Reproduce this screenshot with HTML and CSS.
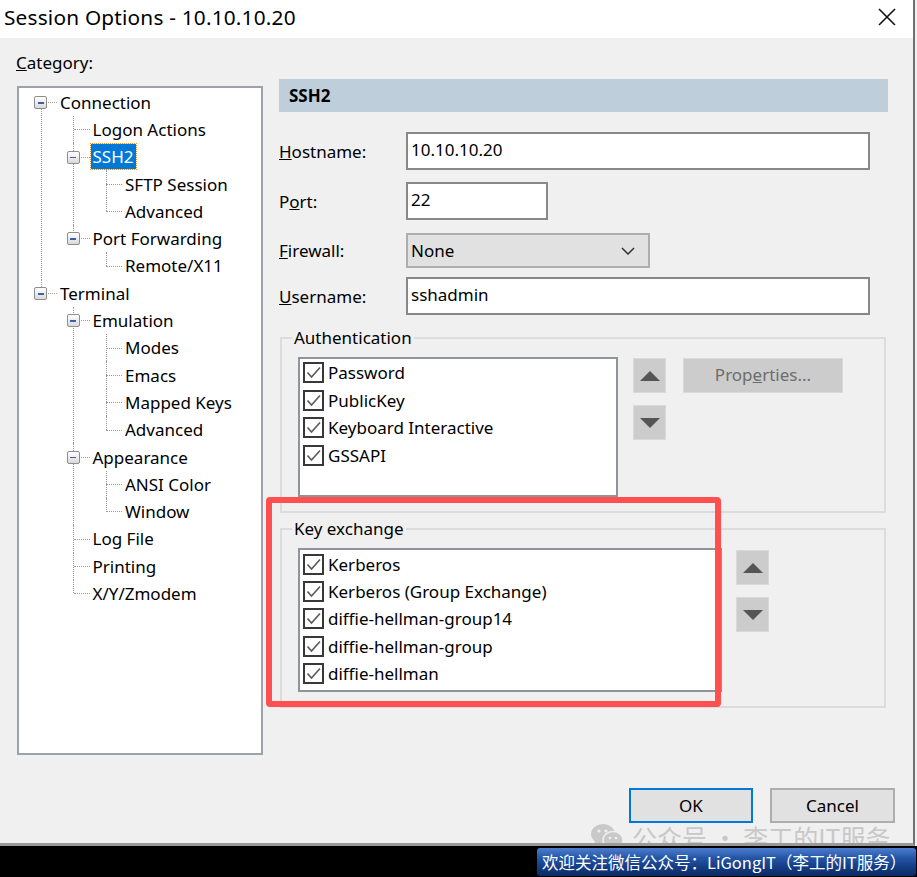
FILE: index.html
```html
<!DOCTYPE html>
<html>
<head>
<meta charset="utf-8">
<title>Session Options</title>
<link rel="stylesheet" href="styles.css">
</head>
<body>
<div class="screen">
  <div class="window">
    <div class="titlebar">
      <span class="title">Session Options - 10.10.10.20</span>
      <svg class="close" width="18" height="18" viewBox="0 0 18 18"><path d="M1 1L17 17M17 1L1 17" stroke="#111" stroke-width="1.6" fill="none"/></svg>
    </div>
    <div class="body">
      <div class="main">
        <div class="left">
          <div class="cat-label"><u>C</u>ategory:</div>
          <div class="tree">
            <ul class="root">
              <li><div class="row"><span class="exp"></span><span class="lbl">Connection</span></div>
                <ul>
                  <li><div class="row"><span class="lbl">Logon Actions</span></div></li>
                  <li><div class="row"><span class="exp"></span><span class="lbl sel">SSH2</span></div>
                    <ul>
                      <li><div class="row"><span class="lbl">SFTP Session</span></div></li>
                      <li><div class="row"><span class="lbl">Advanced</span></div></li>
                    </ul>
                  </li>
                  <li><div class="row"><span class="exp"></span><span class="lbl">Port Forwarding</span></div>
                    <ul>
                      <li><div class="row"><span class="lbl">Remote/X11</span></div></li>
                    </ul>
                  </li>
                </ul>
              </li>
              <li><div class="row"><span class="exp"></span><span class="lbl">Terminal</span></div>
                <ul>
                  <li><div class="row"><span class="exp"></span><span class="lbl">Emulation</span></div>
                    <ul>
                      <li><div class="row"><span class="lbl">Modes</span></div></li>
                      <li><div class="row"><span class="lbl">Emacs</span></div></li>
                      <li><div class="row"><span class="lbl">Mapped Keys</span></div></li>
                      <li><div class="row"><span class="lbl">Advanced</span></div></li>
                    </ul>
                  </li>
                  <li><div class="row"><span class="exp"></span><span class="lbl">Appearance</span></div>
                    <ul>
                      <li><div class="row"><span class="lbl">ANSI Color</span></div></li>
                      <li><div class="row"><span class="lbl">Window</span></div></li>
                    </ul>
                  </li>
                  <li><div class="row"><span class="lbl">Log File</span></div></li>
                  <li><div class="row"><span class="lbl">Printing</span></div></li>
                  <li><div class="row"><span class="lbl">X/Y/Zmodem</span></div></li>
                </ul>
              </li>
            </ul>
          </div>
        </div>

        <div class="right">
          <div class="header">SSH2</div>
          <div class="form">
            <label class="flabel"><u>H</u>ostname:</label>
            <div class="input wide">10.10.10.20</div>
            <label class="flabel">P<u>o</u>rt:</label>
            <div class="input port">22</div>
            <label class="flabel"><u>F</u>irewall:</label>
            <div class="select">None
              <svg class="chev" width="14" height="8" viewBox="0 0 14 8"><path d="M1 1L7 7L13 1" stroke="#333" stroke-width="1.5" fill="none"/></svg>
            </div>
            <label class="flabel user-l"><u>U</u>sername:</label>
            <div class="input wide user">sshadmin</div>
          </div>

          <fieldset class="group auth">
            <legend>Authentication</legend>
            <div class="group-row">
              <div class="listbox auth-list">
                <div class="item"><span class="cb"><svg width="17" height="17" viewBox="0 0 17 17"><path d="M2.5 8.5L6.5 13L15 3.5" stroke="#5a5a5a" stroke-width="1.6" fill="none"/></svg></span>Password</div>
                <div class="item"><span class="cb"><svg width="17" height="17" viewBox="0 0 17 17"><path d="M2.5 8.5L6.5 13L15 3.5" stroke="#5a5a5a" stroke-width="1.6" fill="none"/></svg></span>PublicKey</div>
                <div class="item"><span class="cb"><svg width="17" height="17" viewBox="0 0 17 17"><path d="M2.5 8.5L6.5 13L15 3.5" stroke="#5a5a5a" stroke-width="1.6" fill="none"/></svg></span>Keyboard Interactive</div>
                <div class="item"><span class="cb"><svg width="17" height="17" viewBox="0 0 17 17"><path d="M2.5 8.5L6.5 13L15 3.5" stroke="#5a5a5a" stroke-width="1.6" fill="none"/></svg></span>GSSAPI</div>
              </div>
              <div class="arrows">
                <div class="abtn"><svg width="20" height="10" viewBox="0 0 20 10"><path d="M10 0L20 10H0Z" fill="#555"/></svg></div>
                <div class="abtn"><svg width="20" height="10" viewBox="0 0 20 10"><path d="M0 0H20L10 10Z" fill="#555"/></svg></div>
              </div>
              <div class="props">Prop<u>e</u>rties...</div>
            </div>
          </fieldset>

          <fieldset class="group kex">
            <legend>Key exchange</legend>
            <div class="group-row">
              <div class="listbox kex-list">
                <div class="item"><span class="cb"><svg width="17" height="17" viewBox="0 0 17 17"><path d="M2.5 8.5L6.5 13L15 3.5" stroke="#5a5a5a" stroke-width="1.6" fill="none"/></svg></span>Kerberos</div>
                <div class="item"><span class="cb"><svg width="17" height="17" viewBox="0 0 17 17"><path d="M2.5 8.5L6.5 13L15 3.5" stroke="#5a5a5a" stroke-width="1.6" fill="none"/></svg></span>Kerberos (Group Exchange)</div>
                <div class="item"><span class="cb"><svg width="17" height="17" viewBox="0 0 17 17"><path d="M2.5 8.5L6.5 13L15 3.5" stroke="#5a5a5a" stroke-width="1.6" fill="none"/></svg></span>diffie-hellman-group14</div>
                <div class="item"><span class="cb"><svg width="17" height="17" viewBox="0 0 17 17"><path d="M2.5 8.5L6.5 13L15 3.5" stroke="#5a5a5a" stroke-width="1.6" fill="none"/></svg></span>diffie-hellman-group</div>
                <div class="item"><span class="cb"><svg width="17" height="17" viewBox="0 0 17 17"><path d="M2.5 8.5L6.5 13L15 3.5" stroke="#5a5a5a" stroke-width="1.6" fill="none"/></svg></span>diffie-hellman</div>
              </div>
              <div class="arrows kex-arrows">
                <div class="abtn"><svg width="20" height="10" viewBox="0 0 20 10"><path d="M10 0L20 10H0Z" fill="#555"/></svg></div>
                <div class="abtn"><svg width="20" height="10" viewBox="0 0 20 10"><path d="M0 0H20L10 10Z" fill="#555"/></svg></div>
              </div>
            </div>
          </fieldset>
        </div>
      </div>

      <div class="footer">
        <div class="btn ok">OK</div>
        <div class="btn">Cancel</div>
      </div>

      <div class="highlight"></div>

      <div class="watermark">
        <svg class="wx" width="34" height="28" viewBox="0 0 34 28">
          <ellipse cx="13" cy="11" rx="12" ry="10" fill="#c9c9c9"/>
          <path d="M5 18L3 24L10 20Z" fill="#c9c9c9"/>
          <ellipse cx="23" cy="17" rx="10" ry="8.5" fill="#c9c9c9" stroke="#f0f0f0" stroke-width="1.5"/>
          <path d="M29 23L31 27L25 24.5Z" fill="#c9c9c9"/>
          <circle cx="9" cy="8" r="1.6" fill="#f0f0f0"/>
          <circle cx="16" cy="8" r="1.6" fill="#f0f0f0"/>
          <circle cx="20" cy="15" r="1.3" fill="#f0f0f0"/>
          <circle cx="26" cy="15" r="1.3" fill="#f0f0f0"/>
        </svg>
        <span>公众号 · 李工的IT服务</span>
      </div>
    </div>
  </div>
  <div class="taskbar">
    <div class="banner">欢迎关注微信公众号：LiGongIT（李工的IT服务）</div>
  </div>
</div>
</body>
</html>
```
FILE: styles.css
```css
* { box-sizing: border-box; }
html, body { margin: 0; padding: 0; }
body {
  width: 917px;
  height: 877px;
  overflow: hidden;
  background: #f0f0f0;
  font-family: "Noto Sans", "Noto Sans CJK SC", sans-serif;
  font-size: 17px;
  color: #000;
}
.screen { width: 917px; height: 877px; display: flex; flex-direction: column; background: #f0f0f0; }
.window {
  width: 915px;
  height: 846px;
  border-right: 2px solid #707070;
  border-bottom: 3px solid #9a9a9a;
  background: #f0f0f0;
  position: relative;
  overflow: hidden;
  display: flex;
  flex-direction: column;
}
.titlebar {
  height: 38px;
  background: #fff;
  display: flex;
  align-items: center;
  justify-content: space-between;
  padding: 0 17px 4px 4px;
}
.title { font-size: 20.8px; letter-spacing: 0.2px; }
.close { display: block; margin-top: 0; }

.body { flex: 1; position: relative; }
.main { display: flex; align-items: flex-start; }

/* left: category tree */
.left { margin-left: 17px; width: 246px; padding-top: 15px; }
.cat-label { height: 20px; line-height: 20px; margin: 0 0 13px -1px; }
.tree {
  height: 669px;
  background: #fff;
  border: 2px solid #9da1a9;
  padding-top: 0.5px;
}
.tree ul { list-style: none; margin: 0; padding: 0 0 0 32.5px; }
.tree ul.root { padding-left: 0; }
.tree li { position: relative; }
.tree li::before {
  content: "";
  position: absolute;
  left: 21.5px;
  top: 0;
  bottom: 0;
  border-left: 1px dotted #9a9a9a;
}
.tree li:last-child::before { bottom: auto; height: 13.65px; }
.tree ul.root > li:first-child::before { top: 13.65px; }
.row {
  position: relative;
  height: 27.3px;
  display: flex;
  align-items: center;
  padding-left: 39px;
}
.row::before {
  content: "";
  position: absolute;
  left: 22px;
  top: 13.5px;
  width: 16px;
  border-top: 1px dotted #9a9a9a;
}
.exp {
  position: absolute;
  left: 15px;
  top: 7.5px;
  width: 13px;
  height: 13px;
  border: 1px solid #8e8e8e;
  border-radius: 2px;
  background: linear-gradient(#ffffff, #d9d9d9);
  z-index: 1;
}
.exp::after {
  content: "";
  position: absolute;
  left: 2.5px;
  top: 5px;
  width: 6px;
  height: 1.5px;
  background: #3d5ea8;
}
.lbl { padding: 0 2px; line-height: 25px; height: 25px; white-space: nowrap; }
.lbl.sel { background: #0078d7; color: #fff; outline: 1px dotted #e8901a; }

/* right pane */
.right { margin: 41px 0 0 16px; width: 609px; }
.header {
  height: 33px;
  line-height: 33px;
  background: #bfcedb;
  font-weight: bold;
  padding-left: 10px;
}
.form {
  margin-top: 20px;
  display: grid;
  grid-template-columns: 127px auto;
  row-gap: 0;
  align-items: center;
}
.flabel { white-space: nowrap; }
.flabel.user-l { margin-top: 9px; }
.input {
  height: 38px;
  background: #fff;
  border: 2px solid #888;
  padding: 0 0 0 3px;
  line-height: 32px;
}
.input.wide { width: 464px; }
.input.port { width: 142px; margin: 12px 0 13px; }
.input.user { margin-top: 9px; }
.select {
  width: 244px;
  height: 35px;
  background: #e1e1e1;
  border: 2px solid #adadad;
  padding: 0 13px 0 3px;
  line-height: 30px;
  display: flex;
  justify-content: space-between;
  align-items: center;
}
.chev { display: block; }

.group {
  margin: 12px 0 0 1px;
  width: 606px;
  border: 2px solid #dcdcdc;
  padding: 8px 14px 14px 16px;
  min-width: 0;
}
.group legend {
  padding: 0 2px;
  margin-left: -6px;
  line-height: 22px;
  height: 22px;
}
.kex { margin-top: 5px; }
.group-row { display: flex; align-items: flex-start; }
.listbox {
  background: #fff;
  border: 2px solid #8e939c;
}
.auth-list { width: 320px; height: 140px; }
.kex-list { width: 424px; height: 144px; padding-top: 0.5px; }
.item {
  height: 27.5px;
  display: flex;
  align-items: center;
  padding-left: 3px;
  white-space: nowrap;
}
.kex-list .item { height: 27.3px; }
.cb {
  width: 21px;
  height: 21px;
  border: 2px solid #383838;
  margin-right: 4px;
  display: flex;
  align-items: center;
  justify-content: center;
  flex: none;
}
.cb svg { display: block; }
.arrows { margin: 1px 0 0 15px; display: flex; flex-direction: column; gap: 12px; }
.kex-arrows { margin: 2px 0 0 14px; }
.abtn {
  width: 33px;
  height: 35px;
  background: #cccccc;
  border: 1px solid #d9d9d9;
  display: flex;
  align-items: center;
  justify-content: center;
}
.abtn svg { display: block; }
.props {
  margin: 1px 0 0 17px;
  width: 160px;
  height: 35px;
  background: #cccccc;
  border: 1px solid #d9d9d9;
  color: #6d6d6d;
  text-align: center;
  line-height: 32px;
}

/* footer */
.footer {
  display: flex;
  justify-content: flex-end;
  gap: 17px;
  padding-right: 18px;
  margin-top: 33px;
}
.btn {
  width: 125px;
  height: 35px;
  background: #e1e1e1;
  border: 2px solid #adadad;
  text-align: center;
  line-height: 31px;
}
.btn.ok { width: 124px; border-color: #0078d7; }

/* annotation overlays */
.highlight {
  position: absolute;
  left: 266px;
  top: 459px;
  width: 455px;
  height: 210px;
  border: 6px solid #ff4f4f;
  border-radius: 4px;
}
.watermark {
  position: absolute;
  left: 590px;
  top: 784px;
  display: flex;
  align-items: center;
  gap: 8px;
  color: #c8c8c8;
  font-family: "Noto Sans CJK SC", sans-serif;
  font-size: 25px;
  line-height: 30px;
  white-space: nowrap;
}
.wx { display: block; }

/* bottom band */
.taskbar {
  flex: 1;
  background: #000;
  display: flex;
  justify-content: flex-end;
  padding: 2px 1px 1px 0;
}
.banner {
  width: 379px;
  height: 28px;
  border-radius: 3px;
  background: linear-gradient(#4d7dcf 0%, #2456a6 35%, #153f88 65%, #0b2a62 100%);
  color: #fff;
  font-family: "Noto Sans CJK SC", sans-serif;
  font-size: 16.5px;
  line-height: 28px;
  padding-left: 5px;
  white-space: nowrap;
}
```
